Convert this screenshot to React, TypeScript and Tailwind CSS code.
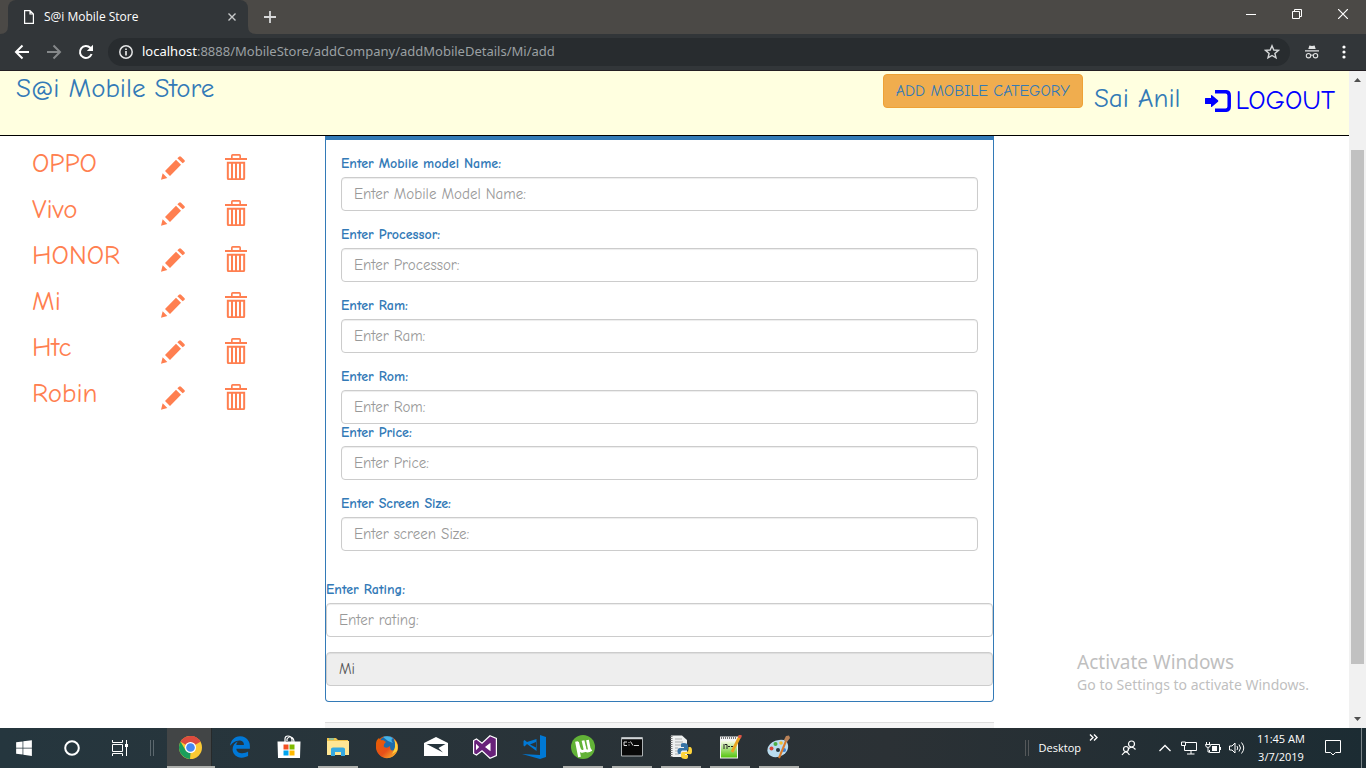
import React from "react";
import { FaWindows, FaEdgeLegacy } from "react-icons/fa";

const pageFont = "font-['Comic_Sans_MS','Comic_Neue','Open_Sans',sans-serif]";
const uiFont = "font-['Segoe_UI','Open_Sans',sans-serif]";

const brands = ["OPPO", "Vivo", "HONOR", "Mi", "Htc", "Robin"];

function Pencil() {
  return (
    <svg viewBox="0 0 72 72" className="size-6" fill="currentColor" aria-hidden="true">
      <path d="M0 71 5 52 19 66ZM12 45 45 11 60 26 27 60ZM49 7 54 2Q57-1 60 2L70 12Q73 15 70 18L65 22Z" />
    </svg>
  );
}

function Trash() {
  return (
    <svg viewBox="0 0 66 78" className="h-[26px] w-[22px]" fill="none" stroke="currentColor" aria-hidden="true">
      <path d="M20.500 12V5Q20.500 2.500 23 2.500H43Q45.500 2.500 45.500 5V12" strokeWidth="5" />
      <path d="M0 15H66" strokeWidth="6" />
      <path d="M8.500 26.500H57.500V73Q57.500 75.500 55 75.500H11Q8.500 75.500 8.500 73Z" strokeWidth="6" />
      <path d="M21 26V75M33 26V75M45 26V75" strokeWidth="6" />
    </svg>
  );
}

function LogoutIcon() {
  return (
    <svg viewBox="0 0 26 22" className="h-[22px] w-[26px]" aria-hidden="true">
      <path d="M10 1.700H20.500Q24.200 1.700 24.200 5.400V16.600Q24.200 20.300 20.500 20.300H10" fill="none" stroke="currentColor" strokeWidth="3.500" />
      <path d="M0 8.500Q0 8 .5 8H6V5.500Q6 4.600 7 5.200L13 10.300Q13.700 11 13 11.700L7 16.800Q6 17.400 6 16.500V14H.5Q0 14 0 13.500Z" fill="currentColor" />
    </svg>
  );
}

function BrowserChrome() {
  return (
    <header className={`${uiFont} shrink-0`}>
      <div className="flex h-[34px] bg-[#4b4946] pl-2">
        <div className="relative flex w-60 items-center rounded-t-lg bg-[#323639] px-4 text-xs text-white">
          <svg viewBox="0 0 8 8" className="absolute bottom-0 -left-2 size-2" fill="#323639"><path d="M8 0V8H0Q8 8 8 0Z" /></svg>
          <svg viewBox="0 0 8 8" className="absolute -right-2 bottom-0 size-2" fill="#323639"><path d="M0 0V8H8Q0 8 0 0Z" /></svg>
          <svg viewBox="0 0 10 14" className="h-3.5 w-2.5" fill="none" stroke="#fff" strokeWidth="1.200"><path d="M.6.6H6L9.400 4V13.400H.6ZM6 .6V4H9.400" /></svg>
          <span className="ml-2.5">S@i Mobile Store</span>
          <button aria-label="Close tab" className="-mr-2 ml-auto flex size-4 items-center justify-center">
            <svg viewBox="0 0 8 8" className="size-2" stroke="#c8cacb" strokeWidth="1.400"><path d="M.5.5 7.500 7.500M7.500.5.5 7.500" /></svg>
          </button>
        </div>
        <button aria-label="New tab" className="ml-2 flex w-7 items-center justify-center">
          <svg viewBox="0 0 12 12" className="size-3" stroke="#d8d9da" strokeWidth="1.800"><path d="M6 0V12M0 6H12" /></svg>
        </button>
        <div className="ml-auto flex h-7">
          <button aria-label="Minimize" className="flex w-[46px] items-center justify-center">
            <svg viewBox="0 0 10 10" className="size-2.5" stroke="#fff"><path d="M0 5.500H10" /></svg>
          </button>
          <button aria-label="Restore" className="flex w-[46px] items-center justify-center">
            <svg viewBox="0 0 10 10" className="size-2.5" fill="none" stroke="#fff"><path d="M.5 2.500H7.500V9.500H.5ZM2.500 2V.5H9.500V7.500H8" /></svg>
          </button>
          <button aria-label="Close" className="flex w-[46px] items-center justify-center">
            <svg viewBox="0 0 10 10" className="size-2.5" stroke="#fff" strokeWidth="1.200"><path d="M0 0 10 10M10 0 0 10" /></svg>
          </button>
        </div>
      </div>
      <div className="flex h-[37px] items-center border-b border-[#241f23] bg-[#323639] pl-[14px]">
        <div className="flex w-[94px] items-center gap-4">
          <button aria-label="Back"><svg viewBox="0 0 16 16" className="size-4" fill="none" stroke="#fff" strokeWidth="2"><path d="M15 8H2M8.500 1.500 2 8 8.500 14.500" /></svg></button>
          <button aria-label="Forward"><svg viewBox="0 0 16 16" className="size-4" fill="none" stroke="#85888a" strokeWidth="2"><path d="M1 8H14M7.500 1.500 14 8 7.500 14.500" /></svg></button>
          <button aria-label="Reload">
            <svg viewBox="0 0 16 16" className="size-4" fill="none" stroke="#fff" strokeWidth="2"><path d="M13.600 10A6 6 0 1 1 12.300 3.800L13 4.500" /><path d="M15 .8V7H8.800Z" fill="#fff" stroke="none" /></svg>
          </button>
        </div>
        <div className="flex h-7 flex-1 items-center rounded-full bg-[#282c2f] pr-2.5 pl-[11px]">
          <svg viewBox="0 0 14 14" className="size-3.5" fill="none" stroke="#e4e5e6"><circle cx="7" cy="7" r="6.200" strokeWidth="1.500" /><path d="M7 6V10.500M7 3.500V5" strokeWidth="1.700" /></svg>
          <label htmlFor="address" className="ml-[9px] font-['Segoe_UI','Noto_Sans',sans-serif] text-[13px] text-white">localhost</label>
          <input
            id="address"
            className="min-w-0 flex-1 bg-transparent font-['Segoe_UI','Noto_Sans',sans-serif] text-[13px] text-[#9ba0a3] focus:outline-none"
            defaultValue=":8888/MobileStore/addCompany/addMobileDetails/Mi/add"
          />
          <button aria-label="Bookmark">
            <svg viewBox="0 0 16 16" className="size-4" fill="none" stroke="#d5d7d8" strokeWidth="1.400"><path d="M8 1.800 9.800 6 14.400 6.400 10.900 9.400 12 13.900 8 11.500 4 13.900 5.100 9.400 1.600 6.400 6.200 6Z" /></svg>
          </button>
        </div>
        <button aria-label="Incognito" className="ml-[15px]">
          <svg viewBox="0 0 14 14" className="size-3.5" fill="#e1e2e3"><path d="M3.300 4 4.400.5 7 1.100 9.600.5 10.700 4ZM0 5.200H14V6.600H0Z" /><g fill="none" stroke="#e1e2e3" strokeWidth="1.100"><circle cx="3.500" cy="10.700" r="2.200" /><circle cx="10.500" cy="10.700" r="2.200" /><path d="M5.700 10.400Q7 9.600 8.300 10.400" /></g></svg>
        </button>
        <button aria-label="Menu" className="mr-[19px] ml-[22px]">
          <svg viewBox="0 0 6 14" className="h-3.5 w-1.5" fill="#fff"><circle cx="3" cy="2" r="1.600" /><circle cx="3" cy="7" r="1.600" /><circle cx="3" cy="12" r="1.600" /></svg>
        </button>
      </div>
    </header>
  );
}

const inputClass =
  "block h-[34px] w-full rounded border border-[#ccc] bg-white px-3 text-[15px] text-[#555] shadow-[inset_0_1px_1px_rgba(0,0,0,0.075)] placeholder:text-[#999] focus:outline-none";

function Field({ id, label, hint, tight = false }: { id: string; label: string; hint: string; tight?: boolean }) {
  return (
    <div className={tight ? "" : "mb-[15px]"}>
      <label htmlFor={id} className="mb-[5px] block text-sm leading-[17px] font-bold text-[#337ab7]">{label}</label>
      <input id={id} placeholder={hint} className={inputClass} />
    </div>
  );
}

function StorePage() {
  return (
    <div className={`${pageFont} flex min-w-0 flex-1 flex-col overflow-hidden bg-white`}>
      <nav className="flex h-[65px] shrink-0 items-start border-b border-black bg-[#ffffe0] pr-[14px] pl-4 text-[#337ab7]">
        <a href="#home" className="text-[27px] leading-9">S@i Mobile Store</a>
        <button className="mt-[3px] ml-auto h-[34px] rounded border border-[#eea236] bg-[#f0ad4e] px-3 text-base">ADD MOBILE CATEGORY</button>
        <a href="#profile" className="mt-2.5 ml-[11px] text-[27px] leading-9">Sai Anil</a>
        <a href="#logout" className="mt-3 ml-6 flex items-center gap-[5px] text-[27px] leading-9 text-[#0000ff]">
          <LogoutIcon />LOGOUT
        </a>
      </nav>
      <div className="grid min-h-0 flex-1 grid-cols-[325fr_669fr_355fr] overflow-hidden">
        <ul className="pt-2 pl-8 text-[27px] text-[#ff7f50]">
          {brands.map((name) => (
            <li key={name} className="grid h-[46px] grid-cols-[129px_64px_1fr] items-start">
              <a href={`#${name}`} className="leading-10">{name}</a>
              <button aria-label={`Edit ${name}`} className="pt-3"><Pencil /></button>
              <button aria-label={`Delete ${name}`} className="pt-2.5"><Trash /></button>
            </li>
          ))}
        </ul>
        <main>
          <form className="mb-5 rounded-b border border-t-4 border-[#337ab7]">
            <div className="p-[15px] pb-0">
              <Field id="model" label="Enter Mobile model Name:" hint="Enter Mobile Model Name:" />
              <Field id="processor" label="Enter Processor:" hint="Enter Processor:" />
              <Field id="ram" label="Enter Ram:" hint="Enter Ram:" />
              <Field id="rom" label="Enter Rom:" hint="Enter Rom:" tight />
              <Field id="price" label="Enter Price:" hint="Enter Price:" />
              <Field id="screen" label="Enter Screen Size:" hint="Enter screen Size:" />
            </div>
            <div className="pt-[15px]">
              <Field id="rating" label="Enter Rating:" hint="Enter rating:" />
              <input aria-label="Company" readOnly defaultValue="Mi" className={`${inputClass} mb-[15px] bg-[#eee]!`} />
            </div>
          </form>
          <div className="h-10 border-t border-[#ddd] bg-[#f5f5f5]" />
        </main>
      </div>
    </div>
  );
}

function Scrollbar() {
  return (
    <div className="flex w-[17px] shrink-0 flex-col items-center bg-[#f1f1f1]">
      <svg viewBox="0 0 17 17" className="h-[17px] w-full" fill="#505050"><path d="M5 11 8.500 7 12 11Z" /></svg>
      <div className="flex w-[13px] flex-1 flex-col pt-[62px] pb-[47px]"><div className="flex-1 bg-[#c1c1c1]" /></div>
      <svg viewBox="0 0 17 17" className="h-[17px] w-full" fill="#505050"><path d="M5 6 8.500 10 12 6Z" /></svg>
    </div>
  );
}

const apps: { name: string; open?: boolean; icon: React.ReactNode }[] = [
  {
    name: "Edge",
    icon: <FaEdgeLegacy className="size-[22px] text-[#0078d7]" />,
  },
  {
    name: "Store",
    icon: (
      <svg viewBox="0 0 24 24" className="size-6"><path d="M8 8V4Q8 1 11 1T15 4V8M10 6V4Q12 1 14 2Q17 3 17 7" fill="none" stroke="#fff" strokeWidth="1.200" /><path d="M.5 6.500H23.500L23 23H1Z" fill="#fff" /><path d="M6.500 9.500h5v5h-5z" fill="#f25022" /><path d="M12.500 9.500h5v5h-5z" fill="#7fba00" /><path d="M6.500 15.500h5v5h-5z" fill="#00a4ef" /><path d="M12.500 15.500h5v5h-5z" fill="#ffb900" /></svg>
    ),
  },
  {
    name: "File Explorer",
    open: true,
    icon: (
      <svg viewBox="0 0 24 24" className="size-6"><path d="M1 3H10L12 5H22V9H1Z" fill="#f0c34b" /><path d="M3 4H8" stroke="#31b5e0" /><path d="M1 6H23V20H1Z" fill="#ffe694" /><path d="M5 21V14Q5 12.500 7 12.500H17Q19 12.500 19 14V21H15V17H9V21Z" fill="#36a9e1" /></svg>
    ),
  },
  {
    name: "Firefox",
    icon: (
      <svg viewBox="0 0 24 24" className="size-6">
        <defs><linearGradient id="fox" x1="0" y1="0" x2="1" y2="1"><stop stopColor="#e66000" /><stop offset=".55" stopColor="#e8501a" /><stop offset="1" stopColor="#ffcb2f" /></linearGradient></defs>
        <circle cx="12" cy="12" r="11" fill="url(#fox)" /><circle cx="12.500" cy="9.500" r="8.500" fill="#1d6cab" /><path d="M8 2Q13 0 18 3Q15 5 18 8L13 6Z" fill="#43b4e8" />
        <path d="M1 9Q1 5 4 3Q5 6 8 5L11 7Q8 9 9 12Q12 14 15 11Q15 17 19 15Q22 12 20 5Q25 12 21 18Q17 24 10 23Q1 20 1 9Z" fill="url(#fox)" /><path d="M19 4Q24 9 22 16L17 19Q22 12 19 4Z" fill="#ffd33d" />
      </svg>
    ),
  },
  {
    name: "Mail",
    icon: (
      <svg viewBox="0 0 24 20" className="h-5 w-6"><path d="M0 6 12 0 24 6V19H0Z" fill="#fff" /><path d="M2.500 7H21.500L14.500 11 19 15.500 2.500 7Z" fill="#26343c" /></svg>
    ),
  },
  {
    name: "Visual Studio",
    icon: (
      <svg viewBox="0 0 24 24" className="size-6"><path d="M17 .8 23.400 3.500V20.500L17 23.200 9 15.800 3.500 20 .6 18.500V5.500L3.500 4 9 8.200Z" fill="#68217a" stroke="#fff" strokeWidth="1.200" /><path d="M3 8.800 6.200 12 3 15.200ZM17.500 7.800V16.200L12 12Z" fill="#fff" /></svg>
    ),
  },
  {
    name: "Visual Studio Code",
    icon: (
      <svg viewBox="0 0 24 24" className="size-6" fill="#0078d4"><path d="M18 0 24 2V22L18 24 0 19 18 20Z" /><path d="M14.500 4V16L5 9 2.500 11.500 1.500 10.500V6L2.500 5 5 7ZM14 7 8 9.500 14 12.500Z" fillRule="evenodd" /></svg>
    ),
  },
  {
    name: "uTorrent",
    open: true,
    icon: (
      <svg viewBox="0 0 24 24" className="size-6"><circle cx="12" cy="12" r="12" fill="#62b237" /><path d="M5.500 6.500 8.500 22M6.500 7 8 13Q9.500 17.500 13 16Q14.500 15 13.500 12L12 5.500M14 14.500Q16 17.500 20.500 14.500M16.500 5 18.500 15" fill="none" stroke="#fff" strokeWidth="2.800" /></svg>
    ),
  },
  {
    name: "Command Prompt",
    open: true,
    icon: (
      <svg viewBox="0 0 22 20" className="h-5 w-[22px]"><path d="M.5.5h21v18.500H.5z" fill="#080808" stroke="#aeb3b5" /><path d="M1 1.500H21" stroke="#d0d5d8" strokeWidth="1.500" /><path d="M6 5H3V8.500H6M8 5v1M8 7.500v1M9.500 4.500 12 8.500M13 8.500H18" fill="none" stroke="#ddd" /></svg>
    ),
  },
  {
    name: "Python",
    open: true,
    icon: (
      <svg viewBox="0 0 24 24" className="size-6"><path d="M2 .5H13L18 5V22H2Z" fill="#eef0f0" /><path d="M2.500 1V22" stroke="#777" strokeWidth="2" strokeDasharray="1 1" /><path d="M6 4h7M6 7h8M6 10h6M6 13h3M6 16h3M6 19h4" stroke="#a9acad" /><path d="M12 9Q12 8 15 8T19 10V14Q19 15.500 17 15.500H13Q11.500 16 11.500 19H10Q8.500 19 8.500 16T11 13H15V12H12Z" fill="#3673a5" /><path d="M19.500 12H21Q23 12 23 16T20 19H16V20H19V22Q19 24 16 24T12 22V19Q12 17 14 17H17Q19.500 17 19.500 14Z" fill="#ffd43b" /></svg>
    ),
  },
  {
    name: "Notepad++",
    open: true,
    icon: (
      <svg viewBox="0 0 24 24" className="size-6"><defs><linearGradient id="npp" x1="0" y1="0" x2="0" y2="1"><stop stopColor="#f8fbe8" /><stop offset="1" stopColor="#55c40d" /></linearGradient></defs><path d="M2 1.500H20V23.500H2Z" fill="#f4f4f4" /><path d="M3 6H19V22.500H3Z" fill="url(#npp)" /><path d="M3 3H18" stroke="#777" strokeDasharray="1 1" strokeWidth="2" /><path d="M6 9V14M7 9.500H9V14M10 11.500H12M13 11.500H15" fill="none" stroke="#222" /><path d="M22 1 14 17" stroke="#eaa521" strokeWidth="2.800" /><path d="M22.500 0 21.500 3" stroke="#df5547" strokeWidth="3" /></svg>
    ),
  },
  {
    name: "Paint",
    open: true,
    icon: (
      <svg viewBox="0 0 24 24" className="size-6"><path d="M12 5Q20 4 21 10 22 16 16 20 9 24 4 21-1 18 1 12 4 6 12 5Z" fill="#b9dcef" /><circle cx="11" cy="15" r="2" fill="#26343c" /><circle cx="4.500" cy="13.500" r="2" fill="#dc4437" /><circle cx="8.500" cy="9" r="2" fill="#4cae46" /><circle cx="14" cy="8" r="1.800" fill="#f2bd32" /><circle cx="17" cy="15" r="2" fill="#3f7ed0" /><path d="M12 23 19 6" stroke="#d97a2a" strokeWidth="2" /><path d="M17 5 19 1 22 .5 23 3 20 7Z" fill="#b98258" /></svg>
    ),
  },
];

function Taskbar() {
  return (
    <footer className={`${uiFont} flex h-10 shrink-0 items-stretch bg-linear-to-r from-[#25363e] via-[#2b3135] via-65% to-[#1c2c33] text-xs text-white`}>
      <button aria-label="Start" className="flex w-12 items-center justify-center"><FaWindows className="size-[18px]" /></button>
      <button aria-label="Cortana" className="flex w-12 items-center justify-center">
        <svg viewBox="0 0 16 16" className="size-4" fill="none" stroke="#fff" strokeWidth="2"><circle cx="8" cy="8" r="6.800" /></svg>
      </button>
      <button aria-label="Task View" className="flex w-12 items-center justify-center">
        <svg viewBox="0 0 16 16" className="size-4" fill="none" stroke="#fff"><path d="M.5 0V2.500H10.500V0M.5 4.500H10.500V11.500H.5ZM.5 16V13.500H10.500V16M14.500 0V16" /><path d="M13 4h3v3h-3z" fill="#fff" stroke="none" /></svg>
      </button>
      <div className="my-3 mr-[13px] ml-1.5 w-1 border-x border-[#5c686e]" />
      <button aria-label="Chrome" className="flex w-12 justify-start border-b-2 border-[#aeb0ad]">
        <span className="flex w-[45px] items-center justify-center border-r border-[#272a2b] bg-[#424546] pl-[3px]">
          <svg viewBox="0 0 24 24" className="size-[23px]"><circle cx="12" cy="12" r="12" fill="#fbc934" /><path d="M12 12 1.600 6A12 12 0 0 1 22.400 6Z" fill="#dd4b3e" /><path d="M12 6H22.400A12 12 0 0 0 12 0Z" fill="#dd4b3e" /><path d="M1.600 6 7 15 12 17.500 11.500 24A12 12 0 0 1 1.600 6Z" fill="#1a9e5c" /><circle cx="12" cy="12" r="5.800" fill="#fff" /><circle cx="12" cy="12" r="4.500" fill="#4688f1" /></svg>
        </span>
      </button>
      {apps.map((app) => (
        <button key={app.name} aria-label={app.name} className="flex w-[49px] justify-center">
          <span className={`flex w-10 items-center justify-center border-b-2 ${app.open ? "border-[#aeb0ad]" : "border-transparent"}`}>{app.icon}</span>
        </button>
      ))}
      <div className="my-3 mr-2.5 ml-auto w-1 border-x border-[#55585a]" />
      <button className="text-[11px]">Desktop</button>
      <button aria-label="More" className="mt-1.5 mr-4 ml-2 flex w-3 items-start">
        <svg viewBox="0 0 10 7" className="h-[7px] w-2.5" fill="none" stroke="#fff" strokeWidth="1.400"><path d="M1 .5 4 3.500 1 6.500M5 .5 8 3.500 5 6.500" /></svg>
      </button>
      <button aria-label="People" className="mr-3 flex w-6 items-center justify-center">
        <svg viewBox="0 0 16 16" className="size-4" fill="none" stroke="#fff" strokeWidth="1.200"><circle cx="10.500" cy="4" r="3" /><path d="M7 9.500Q10.500 5 14.500 9.500" /><circle cx="5" cy="9" r="2.500" /><path d="M1 15Q5 9 8.500 15" /></svg>
      </button>
      <button aria-label="Hidden icons" className="flex w-6 items-center justify-center">
        <svg viewBox="0 0 12 8" className="h-2 w-3" fill="none" stroke="#fff" strokeWidth="1.300"><path d="M.5 7 6 1.500 11.500 7" /></svg>
      </button>
      <button aria-label="Network" className="flex w-6 items-center justify-center">
        <svg viewBox="0 0 16 14" className="h-3.5 w-4" fill="none" stroke="#fff"><path d="M5 1.500H15.500V9.500H3.500V5M10 10V13M6 13H13.500M.5 1H4.500V4.500H.5Z" /></svg>
      </button>
      <button aria-label="Battery" className="flex w-6 items-center justify-center">
        <svg viewBox="0 0 16 12" className="h-3 w-4" fill="none" stroke="#fff"><path d="M6 2.500H14.500V10.500H4.500V8M15.500 5V8M1.500 0V2M4.500 0V2M.5 2.500H5.500Q5.500 5.500 3 5.500T.5 2.500M3 5.500V10H4" /><path d="M7 4h5v5h-5z" fill="#fff" stroke="none" /></svg>
      </button>
      <button aria-label="Volume" className="flex w-6 items-center justify-center">
        <svg viewBox="0 0 16 14" className="h-3.5 w-4" fill="none" stroke="#fff"><path d="M.5 5H3L6 2V12L3 9H.5ZM8 5Q9.500 7 8 9M10 3.500Q13 7 10 10.500M12.500 1.500Q17 7 12.500 12.500" /></svg>
      </button>
      <div className="ml-2 flex w-12 flex-col items-center pt-0.5 text-[11px] leading-[18px] whitespace-nowrap"><time>11:45 AM</time><time>3/7/2019</time></div>
      <button aria-label="Notifications" className="flex w-14 items-center justify-center">
        <svg viewBox="0 0 16 16" className="size-4" fill="none" stroke="#fff"><path d="M.5.5H15.500V12.500H10.500L8 15 5.500 12.500H.5Z" /></svg>
      </button>
      <button aria-label="Show desktop" className="w-[5px] border-l border-[#7b8589]" />
    </footer>
  );
}

export default function App() {
  return (
    <div className="flex h-screen flex-col overflow-hidden bg-white">
      <BrowserChrome />
      <div className="relative flex min-h-0 flex-1">
        <StorePage />
        <Scrollbar />
        <aside className="pointer-events-none absolute right-[57px] bottom-8 font-['Segoe_UI','Noto_Sans',sans-serif] text-[#bfbfbf]">
          <p className="text-[19px] leading-6">Activate Windows</p>
          <p className="text-sm leading-[22px]">Go to Settings to activate Windows.</p>
        </aside>
      </div>
      <Taskbar />
    </div>
  );
}
